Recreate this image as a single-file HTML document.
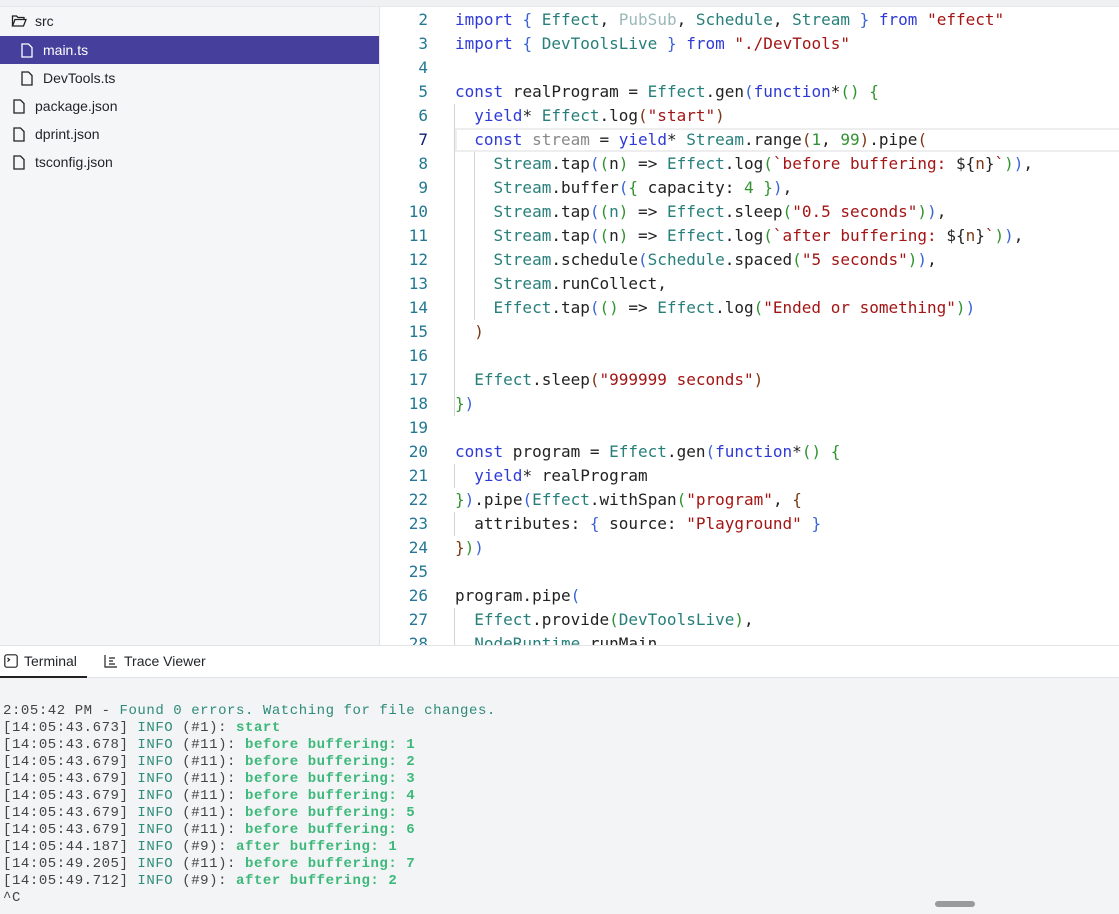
<!DOCTYPE html>
<html><head><meta charset="utf-8"><style>
*{margin:0;padding:0;box-sizing:border-box}
body{width:1119px;height:914px;overflow:hidden;background:#fff;font-family:"Liberation Sans",sans-serif;position:relative}
.top{position:absolute;left:0;top:0;width:1119px;height:7px;background:#f0f1f3;border-bottom:1px solid #e6e7ea}
.side{position:absolute;left:0;top:7px;width:380px;height:638px;background:#f5f6f8;border-right:1px solid #e2e4e8}
.row{position:absolute;left:0;width:379px;height:28px;font-size:14px;color:#1f2328;line-height:28px}
.row svg{position:absolute;top:7px}
.row span{position:absolute}
.sel{background:#463f9b;color:#fff}
.code{position:absolute;left:381px;top:8px;width:738px;height:637px;overflow:hidden;font-family:"DejaVu Sans Mono",monospace;font-size:16px;color:#222}
.ln{position:absolute;left:0;width:47px;text-align:right;color:#237893;height:24px;line-height:24px}
.cl{position:absolute;left:74px;white-space:pre;height:24px;line-height:24px}
.guide{position:absolute;width:1px;background:#d4d4d4}
.k{color:#2f3ad6}.t{color:#267f7a}.s{color:#a31515}.g{color:#319331}.b{color:#3b63d6}.r{color:#7b3814}.d{color:#9bb8b8}.v{color:#888}
.tabs{position:absolute;left:0;top:645px;width:1119px;height:33px;background:#fff;border-top:1px solid #e2e4e8;border-bottom:1px solid #e2e4e8;font-size:14px;color:#1f2328}
.term{position:absolute;left:0;top:678px;width:1119px;height:236px;background:#f3f4f6;font-family:"Liberation Mono",monospace;font-size:14px;letter-spacing:0.56px;color:#444;white-space:pre}
.term div{position:absolute;left:3px;height:17px;line-height:17px}
.tt{color:#2e8b7a}.gb{color:#3cb87a;font-weight:bold}
</style></head><body>
<div class="top"></div>
<div class="side">
 <div class="row" style="top:0"><svg style="left:11px" width="16" height="14" viewBox="0 0 16 14" fill="none" stroke="#222" stroke-width="1.3"><path d="M1.5 12V2h4l1.5 1.5H13V5"/><path d="M1.5 12L4 5.5h11L12.5 12z"/></svg><span style="left:35px">src</span></div>
 <div class="row sel" style="top:29px"><svg style="left:21px" width="12" height="15" viewBox="0 0 12 15" fill="none" stroke="#fff" stroke-width="1.3"><path d="M1 1h6.5L11 4.5V14H1z"/></svg><span style="left:43px">main.ts</span></div>
 <div class="row" style="top:57px"><svg style="left:21px" width="12" height="15" viewBox="0 0 12 15" fill="none" stroke="#222" stroke-width="1.3"><path d="M1 1h6.5L11 4.5V14H1z"/></svg><span style="left:43px">DevTools.ts</span></div>
 <div class="row" style="top:85px"><svg style="left:13px" width="12" height="15" viewBox="0 0 12 15" fill="none" stroke="#222" stroke-width="1.3"><path d="M1 1h6.5L11 4.5V14H1z"/></svg><span style="left:35px">package.json</span></div>
 <div class="row" style="top:113px"><svg style="left:13px" width="12" height="15" viewBox="0 0 12 15" fill="none" stroke="#222" stroke-width="1.3"><path d="M1 1h6.5L11 4.5V14H1z"/></svg><span style="left:35px">dprint.json</span></div>
 <div class="row" style="top:141px"><svg style="left:13px" width="12" height="15" viewBox="0 0 12 15" fill="none" stroke="#222" stroke-width="1.3"><path d="M1 1h6.5L11 4.5V14H1z"/></svg><span style="left:35px">tsconfig.json</span></div>
</div>
<div class="code">
 <div style="position:absolute;left:74px;top:120px;width:670px;height:24px;border:2px solid #eeeeee"></div>
 <div class="guide" style="left:73px;top:96px;height:312px"></div>
 <div class="guide" style="left:93px;top:144px;height:168px"></div>
 <div class="guide" style="left:73px;top:456px;height:24px"></div>
 <div class="guide" style="left:73px;top:504px;height:24px"></div>
 <div class="guide" style="left:73px;top:600px;height:48px"></div>

 <div class="ln" style="top:0">2</div><div class="cl" style="top:0"><span class="k">import</span> <span class="b">{</span> <span class="t">Effect</span>, <span class="d">PubSub</span>, <span class="t">Schedule</span>, <span class="t">Stream</span> <span class="b">}</span> <span class="k">from</span> <span class="s">"effect"</span></div>
 <div class="ln" style="top:24px">3</div><div class="cl" style="top:24px"><span class="k">import</span> <span class="b">{</span> <span class="t">DevToolsLive</span> <span class="b">}</span> <span class="k">from</span> <span class="s">"./DevTools"</span></div>
 <div class="ln" style="top:48px">4</div>
 <div class="ln" style="top:72px">5</div><div class="cl" style="top:72px"><span class="k">const</span> realProgram = <span class="t">Effect</span>.gen<span class="b">(</span><span class="k">function</span>*<span class="g">()</span> <span class="g">{</span></div>
 <div class="ln" style="top:96px">6</div><div class="cl" style="top:96px">  <span class="k">yield</span>* <span class="t">Effect</span>.log<span class="r">(</span><span class="s">"start"</span><span class="r">)</span></div>
 <div class="ln" style="top:120px;color:#0b216f">7</div><div class="cl" style="top:120px">  <span class="k">const</span> <span class="v">stream</span> = <span class="k">yield</span>* <span class="t">Stream</span>.range<span class="r">(</span><span class="g">1</span>, <span class="g">99</span><span class="r">)</span>.pipe<span class="r">(</span></div>
 <div class="ln" style="top:144px">8</div><div class="cl" style="top:144px">    <span class="t">Stream</span>.tap<span class="b">(</span><span class="g">(</span>n<span class="g">)</span> => <span class="t">Effect</span>.log<span class="g">(</span><span class="s">`before buffering: </span>${<span class="r">n</span>}<span class="s">`</span><span class="g">)</span><span class="b">)</span>,</div>
 <div class="ln" style="top:168px">9</div><div class="cl" style="top:168px">    <span class="t">Stream</span>.buffer<span class="b">(</span><span class="g">{</span> capacity: <span class="g">4</span> <span class="g">}</span><span class="b">)</span>,</div>
 <div class="ln" style="top:192px">10</div><div class="cl" style="top:192px">    <span class="t">Stream</span>.tap<span class="b">(</span><span class="g">(</span><span class="t">n</span><span class="g">)</span> => <span class="t">Effect</span>.sleep<span class="g">(</span><span class="s">"0.5 seconds"</span><span class="g">)</span><span class="b">)</span>,</div>
 <div class="ln" style="top:216px">11</div><div class="cl" style="top:216px">    <span class="t">Stream</span>.tap<span class="b">(</span><span class="g">(</span>n<span class="g">)</span> => <span class="t">Effect</span>.log<span class="g">(</span><span class="s">`after buffering: </span>${<span class="r">n</span>}<span class="s">`</span><span class="g">)</span><span class="b">)</span>,</div>
 <div class="ln" style="top:240px">12</div><div class="cl" style="top:240px">    <span class="t">Stream</span>.schedule<span class="b">(</span><span class="t">Schedule</span>.spaced<span class="g">(</span><span class="s">"5 seconds"</span><span class="g">)</span><span class="b">)</span>,</div>
 <div class="ln" style="top:264px">13</div><div class="cl" style="top:264px">    <span class="t">Stream</span>.runCollect,</div>
 <div class="ln" style="top:288px">14</div><div class="cl" style="top:288px">    <span class="t">Effect</span>.tap<span class="b">(</span><span class="g">()</span> => <span class="t">Effect</span>.log<span class="g">(</span><span class="s">"Ended or something"</span><span class="g">)</span><span class="b">)</span></div>
 <div class="ln" style="top:312px">15</div><div class="cl" style="top:312px">  <span class="r">)</span></div>
 <div class="ln" style="top:336px">16</div>
 <div class="ln" style="top:360px">17</div><div class="cl" style="top:360px">  <span class="t">Effect</span>.sleep<span class="r">(</span><span class="s">"999999 seconds"</span><span class="r">)</span></div>
 <div class="ln" style="top:384px">18</div><div class="cl" style="top:384px"><span class="g">}</span><span class="b">)</span></div>
 <div class="ln" style="top:408px">19</div>
 <div class="ln" style="top:432px">20</div><div class="cl" style="top:432px"><span class="k">const</span> program = <span class="t">Effect</span>.gen<span class="b">(</span><span class="k">function</span>*<span class="g">()</span> <span class="g">{</span></div>
 <div class="ln" style="top:456px">21</div><div class="cl" style="top:456px">  <span class="k">yield</span>* realProgram</div>
 <div class="ln" style="top:480px">22</div><div class="cl" style="top:480px"><span class="g">}</span><span class="b">)</span>.pipe<span class="b">(</span><span class="t">Effect</span>.withSpan<span class="g">(</span><span class="s">"program"</span>, <span class="r">{</span></div>
 <div class="ln" style="top:504px">23</div><div class="cl" style="top:504px">  attributes: <span class="b">{</span> source: <span class="s">"Playground"</span> <span class="b">}</span></div>
 <div class="ln" style="top:528px">24</div><div class="cl" style="top:528px"><span class="r">}</span><span class="g">)</span><span class="b">)</span></div>
 <div class="ln" style="top:552px">25</div>
 <div class="ln" style="top:576px">26</div><div class="cl" style="top:576px">program.pipe<span class="b">(</span></div>
 <div class="ln" style="top:600px">27</div><div class="cl" style="top:600px">  <span class="t">Effect</span>.provide<span class="g">(</span><span class="t">DevToolsLive</span><span class="g">)</span>,</div>
 <div class="ln" style="top:624px">28</div><div class="cl" style="top:624px">  <span class="t">NodeRuntime</span>.runMain</div>
</div>
<div class="tabs">
 <svg style="position:absolute;left:4px;top:8px" width="14" height="14" viewBox="0 0 14 14" fill="none" stroke="#222" stroke-width="1.2"><rect x="0.8" y="0.8" width="12.4" height="12.4" rx="2"/><path d="M3.5 4l2 1.8-2 1.8"/></svg>
 <span style="position:absolute;left:24px;top:7px">Terminal</span>
 <div style="position:absolute;left:0;top:30px;width:87px;height:2px;background:#222"></div>
 <svg style="position:absolute;left:104px;top:8px" width="14" height="14" viewBox="0 0 14 14" fill="none" stroke="#222" stroke-width="1.2"><path d="M1 1v12h12M5 4h6M5 7h4M5 10h6"/></svg>
 <span style="position:absolute;left:124px;top:7px">Trace Viewer</span>
</div>
<div class="term">
<div style="top:25px">2:05:42 PM - <span class="tt">Found 0 errors. Watching for file changes.</span></div>
<div style="top:42px">[14:05:43.673] <span class="tt">INFO</span> (#1): <span class="gb">start</span></div>
<div style="top:59px">[14:05:43.678] <span class="tt">INFO</span> (#11): <span class="gb">before buffering: 1</span></div>
<div style="top:76px">[14:05:43.679] <span class="tt">INFO</span> (#11): <span class="gb">before buffering: 2</span></div>
<div style="top:93px">[14:05:43.679] <span class="tt">INFO</span> (#11): <span class="gb">before buffering: 3</span></div>
<div style="top:110px">[14:05:43.679] <span class="tt">INFO</span> (#11): <span class="gb">before buffering: 4</span></div>
<div style="top:127px">[14:05:43.679] <span class="tt">INFO</span> (#11): <span class="gb">before buffering: 5</span></div>
<div style="top:144px">[14:05:43.679] <span class="tt">INFO</span> (#11): <span class="gb">before buffering: 6</span></div>
<div style="top:161px">[14:05:44.187] <span class="tt">INFO</span> (#9): <span class="gb">after buffering: 1</span></div>
<div style="top:178px">[14:05:49.205] <span class="tt">INFO</span> (#11): <span class="gb">before buffering: 7</span></div>
<div style="top:195px">[14:05:49.712] <span class="tt">INFO</span> (#9): <span class="gb">after buffering: 2</span></div>
<div style="top:212px">^C</div>
<div style="top:223px;left:935px;width:40px;height:6px;border-radius:3px;background:#9a9a9a"></div>
</div>
</body></html>
